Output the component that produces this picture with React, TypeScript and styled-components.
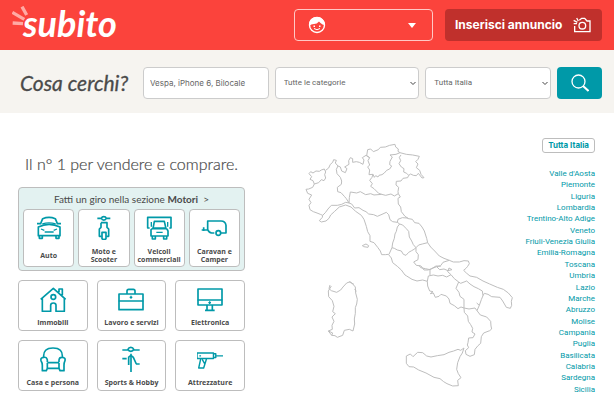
import React from "react";
import styled, { createGlobalStyle } from "styled-components";

const teal = "#0099a8";
const border = "#bdbdbd";

const GlobalStyle = createGlobalStyle`
  *, *::before, *::after { box-sizing: border-box; }
  body { margin: 0; background: #fff; color: #4a4a4a; font-family: "Open Sans", "Noto Sans", sans-serif; }
  button, input, select { font: inherit; }
  a { color: inherit; text-decoration: none; }
`;

const Header = styled.header`
  display: grid;
  grid-template-columns: 1fr 139px 157px;
  gap: 12px;
  align-items: center;
  height: 50px;
  padding: 0 12px;
  background: #fb433c;
  color: #fff;
`;
const Logo = styled.a`
  display: flex;
  align-items: flex-start;
  width: max-content;
  height: 38px;
`;
const LogoRays = styled.svg`
  width: 16px;
  height: 20px;
  margin-right: -5px;
`;
const LogoText = styled.span`
  font: italic 700 36px/34px Lato, sans-serif;
`;
const AccountButton = styled.button`
  display: flex;
  align-items: center;
  justify-content: space-between;
  height: 32px;
  padding: 0 16px 0 13px;
  border: 1px solid #ffc9c5;
  border-radius: 4px;
  background: transparent;
  color: #fff;
`;
const InsertButton = styled.button`
  display: flex;
  align-items: center;
  justify-content: space-between;
  height: 32px;
  padding: 0 11px 0 10px;
  border: 0;
  border-radius: 4px;
  background: #c0302c;
  color: #fff;
  font: 700 12px/16px Inter, sans-serif;
  white-space: nowrap;
`;
const SmallIcon = styled.svg`
  width: 18px;
  height: 18px;
  flex: none;
`;

const SearchBar = styled.form`
  display: grid;
  grid-template-columns: 117px 126fr 145fr 126fr 45px;
  column-gap: 6px;
  align-items: center;
  height: 63px;
  padding: 3px 12px 0 20px;
  background: #f6f4f0;
`;
const SearchTitle = styled.label`
  font: italic 400 21px/24px Lato, sans-serif;
  -webkit-text-stroke: 0.3px currentColor;
  white-space: nowrap;
`;
const SearchInput = styled.input`
  min-width: 0;
  width: 100%;
  height: 32px;
  padding: 0 6px;
  border: 1px solid #ccc;
  border-radius: 4px;
  background: #fff;
  color: #555;
  font: 8px/12px Inter, sans-serif;
  &::placeholder { color: #666; opacity: 1; }
`;
const SelectWrap = styled.div`
  display: grid;
  align-items: center;
  min-width: 0;
`;
const Select = styled.select`
  grid-area: 1 / 1;
  width: 100%;
  height: 32px;
  padding: 0 16px 0 8px;
  border: 1px solid #ccc;
  border-radius: 4px;
  background: #fff;
  color: #666;
  font: 8px/12px Roboto, sans-serif;
  appearance: none;
`;
const Chevron = styled.svg`
  grid-area: 1 / 1;
  justify-self: end;
  width: 6px;
  height: 5px;
  margin-right: 3px;
  pointer-events: none;
`;
const SearchButton = styled.button`
  display: grid;
  place-items: center;
  height: 32px;
  padding: 0;
  border: 0;
  border-radius: 4px;
  background: ${teal};
  color: #fff;
`;

const Main = styled.main`
  display: grid;
  grid-template-columns: 227fr 268fr 82fr;
  padding: 25px 19px 0 18px;
`;
const Categories = styled.section`
  padding-top: 15px;
`;
const Title = styled.h1`
  margin: 0 0 12px;
  font: 300 16px/22px Lato, sans-serif;
  -webkit-text-stroke: 0.2px currentColor;
  text-align: center;
  white-space: nowrap;
`;
const MotorsPanel = styled.section`
  padding: 4px 4px 3px;
  border: 1px solid ${border};
  border-radius: 4px;
  background: #e3f2f1;
`;
const MotorsLink = styled.a`
  display: block;
  margin-bottom: 3px;
  font: 400 10px/14px Lato, sans-serif;
  text-align: center;
  white-space: nowrap;
`;
const TileGrid = styled.div<{ $columns: number; $gap: number }>`
  display: grid;
  grid-template-columns: repeat(${(p) => p.$columns}, minmax(0, 1fr));
  gap: ${(p) => p.$gap}px;
`;
const MoreCategories = styled.div`
  margin-top: 9px;
`;
const Tile = styled.a<{ $tall?: boolean }>`
  display: flex;
  flex-direction: column;
  align-items: center;
  justify-content: space-between;
  height: ${(p) => (p.$tall ? 58 : 51)}px;
  padding: ${(p) => (p.$tall ? "4px 0 1px" : "5px 0 1px")};
  border: 1px solid ${border};
  border-radius: 4px;
  background: #fff;
`;
const TileIcon = styled.svg`
  width: 26px;
  height: 26px;
  flex: none;
  fill: none;
  stroke: ${teal};
  stroke-width: 5;
  stroke-linejoin: round;
`;
const TileLabel = styled.span<{ $tall?: boolean }>`
  display: flex;
  align-items: center;
  height: ${(p) => (p.$tall ? 18 : 12)}px;
  font-size: 7px;
  font-weight: 700;
  line-height: 8px;
  text-align: center;
  white-space: pre;
`;
const ItalyMap = styled.svg`
  width: 100%;
  height: auto;
  margin-top: 1px;
  fill: none;
  stroke: #bebebe;
  stroke-linejoin: round;
  path { vector-effect: non-scaling-stroke; }
`;
const Regions = styled.nav`
  display: flex;
  flex-direction: column;
  align-items: flex-end;
  color: ${teal};
  font: 8px/11px Roboto, sans-serif;
`;
const AllItaly = styled.button`
  height: 15px;
  padding: 0 5px;
  border: 1px solid ${border};
  border-radius: 3px;
  background: #fff;
  color: ${teal};
  font: 700 8px/11px Inter, sans-serif;
  white-space: nowrap;
`;
const RegionList = styled.ul`
  display: grid;
  grid-auto-rows: 1fr;
  min-height: 227px;
  margin: 15px 0 0;
  padding: 0;
  list-style: none;
  text-align: right;
  white-space: nowrap;
`;

type Category = { label: string; box: string; art: React.ReactNode };

const motors: Category[] = [
  {
    label: "Auto",
    box: "78 88 78 78",
    art: (
      <>
        <path d="M91 119 98 102Q117 94 136 102L143 119M85 127Q117 111 150 127V153H85ZM81 117H91M143 117H153M88 153V161H97V153M138 153V161H147V153" />
        <path strokeWidth="4" d="M97 118Q117 111 137 118M93 133 103 137M141 133 131 137M104 142H131" />
      </>
    ),
  },
  {
    label: "Moto e\nScooter",
    box: "245 88 78 78",
    art: (
      <>
        <path d="M264 101H276M291 101H303M276 101A8 8 0 0 1 291 101A8 8 0 0 1 276 101ZM275 114H293V128L298 133V155H291M275 114V128L270 133V155H277" />
        <path d="M278 143H290V162Q284 168 278 162Z" />
      </>
    ),
  },
  {
    label: "Veicoli\ncommerciali",
    box: "49 88 78 78",
    art: (
      <>
        <path d="M60 130H54V98H124V130H119M70 132 74 110H104L109 132ZM64 135Q68 130 75 130H104Q113 131 115 139V154H64ZM68 154V163H77V154M102 154V163H111V154" />
        <path strokeWidth="4" d="M80 143H99M65 112V126M114 112V126" />
      </>
    ),
  },
  {
    label: "Caravan e\nCamper",
    box: "214 88 78 78",
    art: (
      <>
        <path d="M262 145H289V122Q287 109 274 109H234V135Q238 144 246 145H254M216 136H234M222 128V139" />
        <circle cx="266" cy="145" r="7" fill="#fff" />
      </>
    ),
  },
];

const others: Category[] = [
  {
    label: "Immobili",
    box: "90 33 78 78",
    art: (
      <>
        <path d="M92 73 130 40 167 73M97 70V109H122V91Q122 84 130 84Q138 84 138 91V109H163V70M147 52V42H157V61" />
        <circle cx="130" cy="66" r="7" />
      </>
    ),
  },
  {
    label: "Lavoro e servizi",
    box: "326 33 78 78",
    art: (
      <>
        <path d="M329 57H401V104H329ZM353 56V48Q353 43 358 43H372Q377 43 377 48V56" />
        <path strokeWidth="4" d="M328 78H402M365 62V71M361 67H369" />
      </>
    ),
  },
  {
    label: "Elettronica",
    box: "201 33 78 78",
    art: (
      <>
        <path d="M204 42H276V90H204ZM231 90V106M247 90V106M225 106H254" />
        <path strokeWidth="4" d="M203 75H277M239 79V87M235 83H243" />
      </>
    ),
  },
  {
    label: "Casa e persona",
    box: "90 213 78 78",
    art: (
      <path d="M101 246Q99 219 129 219Q159 219 157 246M112 261V255Q110 245 101 247Q91 248 93 257Q97 263 97 271V287H109L112 280H147L150 287H162V271Q162 263 165 257Q167 248 157 247Q148 246 147 255V261M112 263H147M112 263V280M147 263V280" />
    ),
  },
  {
    label: "Sports & Hobby",
    box: "326 213 78 78",
    art: (
      <>
        <path d="M339 225H356M373 225H391M356 223A9 9 0 0 1 373 223A9 9 0 0 1 356 223ZM339 251H352M380 267H391M358 270V247Q364 238 372 247L381 267" />
        <path d="M365 236V292" />
      </>
    ),
  },
  {
    label: "Attrezzature",
    box: "201 213 90 78",
    art: (
      <>
        <path d="M201 231H258V250H201ZM258 234H266V247H258M214 251 207 283H224L234 251M219 253 228 269" />
        <path strokeWidth="4" d="M267 241H291M209 241H215" />
      </>
    ),
  },
];

const regions = [
  "Valle d'Aosta", "Piemonte", "Liguria", "Lombardia", "Trentino-Alto Adige", "Veneto",
  "Friuli-Venezia Giulia", "Emilia-Romagna", "Toscana", "Umbria", "Lazio", "Marche", "Abruzzo",
  "Molise", "Campania", "Puglia", "Basilicata", "Calabria", "Sardegna", "Sicilia",
];

function Tiles({ items, columns, gap, tall }: { items: Category[]; columns: number; gap: number; tall?: boolean }) {
  return (
    <TileGrid $columns={columns} $gap={gap}>
      {items.map((item) => (
        <Tile key={item.label} href="#" $tall={tall}>
          <TileIcon viewBox={item.box} aria-hidden="true">{item.art}</TileIcon>
          <TileLabel $tall={tall}>{item.label}</TileLabel>
        </Tile>
      ))}
    </TileGrid>
  );
}

function Dropdown({ label, value }: { label: string; value: string }) {
  return (
    <SelectWrap>
      <Select aria-label={label}>
        <option>{value}</option>
      </Select>
      <Chevron viewBox="0 0 6 5" fill="none" stroke="#444" aria-hidden="true">
        <path d="m.5 1 2.500 2.500L5.500 1" />
      </Chevron>
    </SelectWrap>
  );
}

function Map() {
  return (
    <ItalyMap viewBox="245 139 268 255" role="img" aria-label="Mappa d'Italia">
      <g transform="translate(290 135) scale(.33333)">
        <path d="M73 147 69 137 60 133 65 125 57 116 62 110 69 114 78 108 88 109 94 105 103 102 107 111 104 119 107 129 102 137 94 134 86 143 73 147 68 157 56 162 48 163 53 175 65 180 57 193 63 203 57 211 60 224 70 230 81 234 91 238 98 241 97 247 88 257 94 261 108 258 117 250 122 240 134 229 148 216 167 210 183 216 197 229 214 241 222 253 229 274 233 290 240 302 240 319 252 323 263 337 271 348 275 359 286 359 295 358 304 369 308 383 322 394 334 405 345 420 M107 106 116 99 121 88 128 82 131 74 139 76 136 84 144 93 139 103 141 116 151 127 155 138 154 148 142 157 143 170 153 173 163 184 169 191 177 204 167 202 155 208 142 211 124 211 114 222 106 233 98 241 M144 93 151 96 155 108 166 113 171 101 164 96 177 88 176 77 181 68 188 71 188 82 199 80 208 82 219 88 222 75 217 68 228 61 239 68 230 62 233 44 242 42 250 50 265 44 271 37 286 36 299 31 315 28 317 36 325 42 324 49 330 53 318 58 300 60 307 66 300 79 299 89 305 93 299 102 290 106 283 114 276 119 267 121 264 126 257 122 253 127 249 118 237 119 239 105 233 96 239 90 234 77 239 68 M249 118 246 127 239 136 247 146 242 154 252 161 266 175 275 178 M177 204 178 188 181 171 200 174 211 170 227 179 242 176 252 180 275 178 287 181 303 177 313 183 325 176 331 186 324 190 325 207 332 216 334 230 345 244 356 251 367 253 374 263 387 265 396 276 403 288 410 310 413 323 422 336 434 348 448 363 462 370 478 376 490 381 508 381 522 377 535 378 538 386 533 394 528 400 M330 53 349 58 368 60 388 64 384 73 377 80 384 87 379 98 389 106 393 118 402 128 396 129 385 115 379 122 370 121 362 117 356 121 353 128 339 130 333 138 319 139 318 150 326 157 324 170 325 176 M333 60 328 67 332 77 327 86 334 96 342 101 341 111 350 115 356 121 M177 204 185 207 194 219 207 218 219 226 228 230 236 237 251 239 262 244 276 238 289 232 296 239 300 254 308 260 322 262 329 267 322 276 319 289 315 297 313 310 308 324 306 338 297 358 M329 267 338 270 348 280 356 289 358 306 365 318 370 329 378 338 372 343 365 347 356 352 348 361 340 358 334 348 322 345 313 340 306 338 M322 262 324 253 337 248 351 249 356 251 M378 338 386 330 397 327 413 323 M378 338 378 350 385 359 384 374 371 381 379 391 393 393 402 405 414 405 425 401 440 395 452 392 459 382 468 379 478 376 M440 395 449 404 462 402 474 407 486 404 M217 332 228 327 236 332 234 337 221 335Z" />
      </g>
      <g transform="translate(310 265) scale(.33333)">
        <path d="M60 60 57 71 64 77 80 82 92 75 99 66 110 54 121 50 129 58 136 66 137 84 142 103 140 117 136 128 136 145 133 162 134 177 129 198 118 193 103 196 98 211 82 217 75 212 65 211 68 204 55 198 67 193 66 181 72 169 66 156 76 146 68 140 72 124 67 107 56 95 55 78 64 63M55 198 65 211M118 51 132 58M134 72 139 79M285 30 290 33 306 43 321 48 338 45 352 49 353 63 359 78 369 80 361 86 370 84 376 97 387 94 393 88 409 93 417 102 420 115 433 122 444 131 453 126 462 129 463 142 473 153 475 169 482 179 488 190 486 201 495 207 489 218 476 219 474 233 472 240 476 248 466 257 468 268 480 274 493 269 495 253 504 242 512 235 514 215 521 204 539 197 545 192 543 183 542 169 530 156 511 150 501 137 508 121 514 104 519 92 523 85 534 88 545 95 570 97 578 108 589 127 601 130 605 121 604 109 607 98 595 84 580 73 562 67 539 57 519 48 500 37 480 33 469 24 461 16 468 10M352 49 355 33 370 30 384 33 398 31 410 36 423 29 433 41 446 51 452 55 470 48 480 57 492 65 505 71 517 78 519 92M446 51 438 70 447 82 450 94 462 103 462 129 477 132 495 129 501 137M500 114 508 121M360 30 360 14 346 11 332 8 326 0M360 14 378 3 392 4M423 29 413 20 417 9 426 14M289 285 289 273 301 267 309 275 323 262 338 263 350 273 363 276 382 272 402 269 417 262 431 258 444 253 452 256 462 249 457 264 450 275 443 293 440 313 445 326 453 338 443 346 445 362 428 363 411 356 401 350 390 341 372 337 348 324 326 315 311 306 297 305 289 295Z" />
      </g>
    </ItalyMap>
  );
}

export default function App() {
  return (
    <>
      <GlobalStyle />
      <Header>
        <Logo href="#" aria-label="subito">
          <LogoRays viewBox="36 18 48 60" fill="none" stroke="#ffaaa5" strokeWidth="10" aria-hidden="true">
            <path d="M66 20 80 45M37 37 73 58M38 69 69 71" />
          </LogoRays>
          <LogoText>subito</LogoText>
        </Logo>
        <AccountButton type="button" aria-label="Account">
          <SmallIcon viewBox="0 0 18 18" fill="none" stroke="currentColor" aria-hidden="true">
            <circle cx="9" cy="9" r="7.500" strokeWidth="1.400" />
            <path fill="currentColor" stroke="none" d="M1 9C1 3 5 1 9 1S17 4 17 9L14.500 8.500 12.500 7 11 5.500Q9 8 6 8Q3 8 1 10Z" />
            <path d="M6 12.500Q9 15 12 12.500" />
            <path strokeWidth="1.500" d="M5.500 10.200H7M11 10.200H12.500" />
          </SmallIcon>
          <svg width="8" height="5" viewBox="0 0 8 5" fill="currentColor" aria-hidden="true">
            <path d="M0 0H8L4 5Z" />
          </svg>
        </AccountButton>
        <InsertButton type="button">
          Inserisci annuncio
          <SmallIcon viewBox="878 50 54 50" fill="none" stroke="currentColor" strokeWidth="4" aria-hidden="true">
            <path d="M897 61 904 55H913L920 63H929V95H883V78" />
            <circle cx="906" cy="77" r="10" />
            <path d="M880 71H890M880 61 891 67M889 54 894 63" />
          </SmallIcon>
        </InsertButton>
      </Header>
      <SearchBar onSubmit={(e) => e.preventDefault()}>
        <SearchTitle htmlFor="query">Cosa cerchi?</SearchTitle>
        <SearchInput id="query" placeholder="Vespa, iPhone 6, Bilocale" />
        <Dropdown label="Categoria" value="Tutte le categorie" />
        <Dropdown label="Regione" value="Tutta Italia" />
        <SearchButton aria-label="Cerca">
          <SmallIcon viewBox="0 0 18 18" fill="none" stroke="currentColor" aria-hidden="true">
            <circle cx="7.500" cy="7.500" r="6.500" strokeWidth="1.300" />
            <path strokeWidth="2" d="m12 12 5.500 5" />
          </SmallIcon>
        </SearchButton>
      </SearchBar>
      <Main>
        <Categories>
          <Title>Il n° 1 per vendere e comprare.</Title>
          <MotorsPanel>
            <MotorsLink href="#">Fatti un giro nella sezione <b>Motori</b>&nbsp; &gt;</MotorsLink>
            <Tiles items={motors} columns={4} gap={4} tall />
          </MotorsPanel>
          <MoreCategories>
            <Tiles items={others} columns={3} gap={9} />
          </MoreCategories>
        </Categories>
        <Map />
        <Regions aria-label="Regioni">
          <AllItaly type="button">Tutta Italia</AllItaly>
          <RegionList>
            {regions.map((region) => (
              <li key={region}><a href="#">{region}</a></li>
            ))}
          </RegionList>
        </Regions>
      </Main>
    </>
  );
}
